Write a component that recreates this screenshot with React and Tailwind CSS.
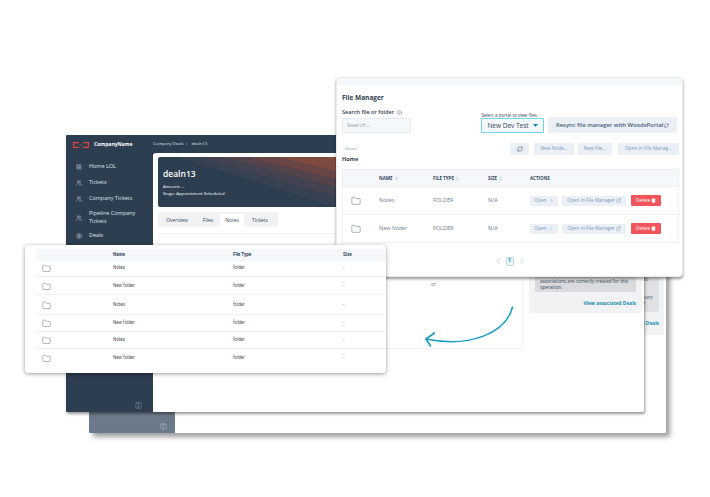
import React from "react";
import { Folder, Users, LayoutGrid, CircleDollarSign, RefreshCw, ExternalLink, Trash2, ChevronRight, ChevronLeft, ChevronsUpDown, Columns2, Info } from "lucide-react";

const font = { fontFamily: '"Open Sans", "Liberation Sans", sans-serif' };

function Side({ icon: I, children, two }) {
  return (
    <div className={`flex items-center gap-[7px] pl-[10px] text-[5.5px] leading-[7.5px] text-[#dfe3e8] ${two ? "h-[21px]" : "h-[16px]"}`}>
      <I size={6} strokeWidth={1.5} className="shrink-0" />
      <span className="font-medium">{children}</span>
    </div>
  );
}

function FmRow({ name }) {
  return (
    <div className="flex h-[28px] items-center border-t border-[#eef2f6] text-[5.5px] text-[#6b7c8f]">
      <div className="flex w-[36px] pl-[8px]">
        <Folder size={10} strokeWidth={1} className="text-[#33475b]" />
      </div>
      <div className="w-[54px]">{name}</div>
      <div className="w-[55px]">FOLDER</div>
      <div className="w-[42px]">N/A</div>
      <div className="flex items-center">
        <div className="flex h-[10px] w-[28px] items-center justify-center gap-[2px] rounded-[1px] bg-[#eaf0f6] text-[4.8px] text-[#7c98b6]">Open <ChevronRight size={5} /></div>
        <div className="ml-[4px] flex h-[10px] w-[64px] items-center justify-center gap-[1px] rounded-[1px] bg-[#eaf0f6] text-[4.8px] text-[#7c98b6]">Open in File Manager <ExternalLink size={5} /></div>
        <div className="ml-[5px] flex h-[11px] w-[30px] items-center justify-center gap-[1px] rounded-[1px] bg-[#f2545b] text-[4.8px] text-white">Delete <Trash2 size={5} fill="white" /></div>
      </div>
    </div>
  );
}

function TblRow({ name, h, border = true, shift = "" }) {
  return (
    <div className={`flex items-center text-[4.5px] text-[#4b5058] ${shift} ${border ? "border-b border-[#f0f1f3]" : ""}`} style={{ height: h }}>
      <div className="flex w-[77px] pl-[6px]"><Folder size={9} strokeWidth={1} className="text-[#33475b]" /></div>
      <div className="w-[120px]">{name}</div>
      <div className="w-[110px]">folder</div>
      <div>-</div>
    </div>
  );
}

export default function App() {
  return (
    <div className="relative h-[497px] w-[710px] overflow-hidden bg-white" style={font}>
      {/* back window */}
      <div className="absolute left-[89px] top-[150px] flex h-[283px] w-[577px] overflow-hidden rounded-[1px] bg-white shadow-[4px_4px_5px_rgba(0,0,0,0.38)]">
        <div className="flex w-[86px] flex-col justify-end bg-[#6b7a8a] pb-[3px] pr-[8px]">
          <Columns2 size={7} strokeWidth={1} className="ml-auto text-[#e5e7eb]" />
        </div>
        <div className="relative flex-1">
          <div className="absolute bottom-[98px] right-[2px] h-[70px] w-[40px] rounded-r-[2px] bg-[#f1f2f4] pr-[5px]">
            <div className="h-[47px] rounded-r-[2px] bg-[#dfe1e4] pl-[20px] pt-[11px] text-[4.5px] leading-[6px] text-[#4a5568]">to<br /><br /><br />sary<br />l</div>
            <div className="flex justify-end pt-[8px] text-[4.8px] font-bold whitespace-nowrap text-[#1b8fb0]">View associated Deals</div>
          </div>
        </div>
      </div>

      {/* middle window */}
      <div className="absolute left-[66px] top-[135px] flex h-[277px] w-[578px] overflow-hidden rounded-[1px] bg-[#2d3e50] shadow-[1px_2px_3px_rgba(0,0,0,0.4)]">
        <div className="flex w-[87px] flex-col">
          <div className="flex h-[18px] items-center gap-[5px] pl-[7px] pt-[1px]">
            <svg width="16" height="6" viewBox="0 0 16 6" fill="none" stroke="#e8413d" strokeWidth="1.2">
              <path d="M6 .6H.6v4.800H6M10 .6h5.400v4.800H10" />
              <path d="M6 3h4" stroke="#a8545c" strokeWidth=".6" />
            </svg>
            <span className="text-[5px] font-bold text-white">CompanyName</span>
          </div>
          <div className="pt-[6px]">
            <Side icon={LayoutGrid}>Home LOL</Side>
            <Side icon={Users}>Tickets</Side>
            <Side icon={Users}>Company Tickets</Side>
            <Side icon={Users} two>Pipeline Company<br />Tickets</Side>
            <Side icon={CircleDollarSign}>Deals</Side>
            <div className="mx-[6px] mt-[1px] h-[14px] rounded-[2px] bg-[#3b4c5e]" />
          </div>
          <div className="mt-auto flex justify-end pb-[3px] pr-[11px]">
            <Columns2 size={7} strokeWidth={1} className="text-[#cbd5e0]" />
          </div>
        </div>
        <div className="flex flex-1 flex-col">
          <div className="flex h-[18px] items-center gap-[2px] text-[4.2px] text-[#dfe3e8]">
            <span>Company Deals</span><ChevronRight size={4} /><span>dealn13</span>
          </div>
          <div className="flex flex-1 gap-[6px] rounded-tl-[3px] bg-white pl-[5px] pr-[2px] pt-[4px]">
            <div className="flex w-[365px] flex-col">
              <div className="relative h-[50px] w-[480px] overflow-hidden rounded-[2px] bg-[#2d3e50] pl-[5px] pt-[11px] text-white">
                <svg className="absolute left-0 top-0" width="480" height="50" viewBox="0 0 480 50">
                  <polygon points="20,0 480,0 480,146" fill="#364152" />
                  <polygon points="40,0 480,0 480,128" fill="#424250" />
                  <polygon points="65,0 480,0 480,110" fill="#54434a" />
                  <polygon points="90,0 480,0 480,97" fill="#694645" />
                  <polygon points="120,0 480,0 480,87" fill="#7f4a40" />
                </svg>
                <div className="relative text-[8.5px] font-semibold leading-[12px]">dealn13</div>
                <div className="relative mt-[2.500px] text-[4.300px] leading-[7px]">Amount: --<br />Stage: Appointment Scheduled</div>
              </div>
              <div className="mt-[5px] flex h-[15px] w-[120px] items-end rounded-[2px] bg-[#f1f2f4] text-[5px] text-[#33475b]">
                <div className="flex h-[13px] w-[38px] items-center justify-center">Overview</div>
                <div className="flex h-[13px] w-[24px] items-center justify-center">Files</div>
                <div className="flex h-[13px] w-[24px] items-center justify-center bg-white">Notes</div>
                <div className="flex h-[13px] w-[32px] items-center justify-center">Tickets</div>
              </div>
              <div className="mt-[6px] h-[116px] rounded-[2px] border border-[#f1f2f4] pl-[272px] pt-[47px] text-[5px] text-[#6b7280]">or</div>
            </div>
            <div className="flex h-[156px] w-[113px] flex-col self-start rounded-[2px] bg-[#f1f2f4] px-[6px] pt-[111px]">
              <div className="h-[24px] shrink-0 rounded-[2px] bg-[#d9dbde] px-[5px] pt-[10px] text-[4.6px] leading-[6px] whitespace-nowrap text-[#33475b]">
                associations are correctly created for this<br />operation.
              </div>
              <div className="pt-[8px] text-right text-[4.8px] font-bold text-[#1b8fb0]">View associated Deals</div>
            </div>
          </div>
        </div>
      </div>

      {/* file manager */}
      <div className="absolute left-[336px] top-[77px] h-[200px] w-[347px] overflow-hidden rounded-[4px] border border-[#e6ebf0] bg-white shadow-[0_2px_3px_rgba(0,0,0,0.4)]">
        <div className="h-[7px] bg-[#f5f8fa]" />
        <div className="px-[5px]">
          <div className="pt-[8px] text-[6.5px] font-bold leading-[10px] text-[#2f3e4e]">File Manager</div>
          <div className="mt-[5px] flex items-end">
            <div className="w-[141px]">
              <div className="flex items-center gap-[2px] text-[5.5px] font-semibold leading-[8px] text-[#2f3e4e]">Search file or folder <Info size={5} className="ml-[1px] text-[#516f90]" /></div>
              <div className="mt-[2px] flex h-[15px] w-[69px] items-center rounded-[1px] border border-[#e6ebf0] bg-[#f5f8fa] pl-[4px] text-[6px] text-[#8c9db0]">Search...</div>
            </div>
            <div>
              <div className="text-[4.5px] leading-[6px] text-[#33475b]">Select a portal to view files</div>
              <div className="flex h-[15px] w-[63px] items-center justify-between rounded-[1px] border border-[#6fd6e0] bg-[#f5f8fa] px-[5px] text-[6.5px] text-[#33475b]">
                New Dev Test <svg width="5" height="3" viewBox="0 0 5 3"><path d="M0 0h5L2.500 3z" fill="#0091ae" /></svg>
              </div>
            </div>
            <div className="ml-[4px] flex h-[16px] w-[130px] items-center justify-center gap-[1px] rounded-[1px] bg-[#eaf0f6] text-[5.8px] font-semibold text-[#425b76]">
              Resync file manager with WoodsPortal <RefreshCw size={5} />
            </div>
          </div>
          <div className="mt-[10px] flex h-[12px] items-center text-[#7c98b6]">
            <span className="w-[168px] shrink-0 pl-[3px] text-[4.2px]">Home</span>
            <div className="flex h-[12px] w-[19px] shrink-0 items-center justify-center rounded-[1px] bg-[#eaf0f6] text-[#425b76]"><RefreshCw size={6} /></div>
            <div className="ml-[5px] flex h-[12px] w-[40px] shrink-0 items-center justify-center rounded-[1px] bg-[#eaf0f6] text-[4.8px]">New Folde...</div>
            <div className="ml-[4px] flex h-[12px] w-[34px] shrink-0 items-center justify-center rounded-[1px] bg-[#eaf0f6] text-[4.8px]">New File...</div>
            <div className="ml-[6px] flex h-[12px] w-[61px] shrink-0 items-center justify-center rounded-[1px] bg-[#eaf0f6] text-[4.8px]">Open in File Manag...</div>
          </div>
          <div className="text-[5.5px] font-bold leading-[9px] text-[#2f3e4e]">Home</div>
          <div className="mt-[5px] w-[337px] border border-[#eef2f6]">
            <div className="flex h-[16px] items-center bg-[#f5f8fa] text-[4.5px] font-bold text-[#33475b]">
              <div className="w-[36px]" />
              <div className="flex w-[54px] items-center gap-[1px]">NAME <ChevronsUpDown size={5} className="text-[#7c98b6]" /></div>
              <div className="flex w-[55px] items-center gap-[1px]">FILE TYPE <ChevronsUpDown size={5} className="text-[#7c98b6]" /></div>
              <div className="flex w-[42px] items-center gap-[1px]">SIZE <ChevronsUpDown size={5} className="text-[#7c98b6]" /></div>
              <div>ACTIONS</div>
            </div>
            <FmRow name="Notes" />
            <FmRow name="New folder" />
          </div>
          <div className="mt-[13px] flex items-center justify-center gap-[3px] text-[#7c98b6]">
            <ChevronLeft size={10} strokeWidth={1} />
            <div className="flex h-[9px] w-[8px] items-center justify-center rounded-[1px] border border-[#cbd6e2] bg-[#e5f5f8] text-[5px] font-bold text-[#0091ae]">1</div>
            <ChevronRight size={10} strokeWidth={1} />
          </div>
        </div>
      </div>

      {/* front table */}
      <div className="absolute left-[25px] top-[245px] h-[128px] w-[361px] rounded-[4px] bg-white pl-[11px] pt-[4px] shadow-[0_1px_4px_rgba(0,0,0,0.4)]" style={{ fontFamily: '"Roboto", "Liberation Sans", sans-serif' }}>
        <div className="flex h-[12px] items-center bg-[#f5f8fa] text-[4.5px] font-bold text-[#33475b]">
          <div className="w-[77px]" />
          <div className="w-[120px]">Name</div>
          <div className="w-[110px]">File Type</div>
          <div>Size</div>
        </div>
        <TblRow name="Notes" h={16} />
        <TblRow name="New folder" h={18} shift="pt-[1px]" />
        <TblRow name="Notes" h={20} shift="pt-[2px]" />
        <TblRow name="New folder" h={17} shift="pt-[1px]" />
        <TblRow name="Notes" h={17} />
        <TblRow name="New folder" h={18} border={false} />
      </div>

      {/* arrow */}
      <svg className="absolute left-[420px] top-[300px]" width="100" height="52" viewBox="420 300 100 52" fill="none" stroke="#1b9fc0" strokeWidth="1.6" strokeLinecap="round" strokeLinejoin="round">
        <path d="M512.500 307C506 333 470 348 426 339" />
        <path d="M434.500 333L426 339L430.500 346" />
      </svg>
    </div>
  );
}
